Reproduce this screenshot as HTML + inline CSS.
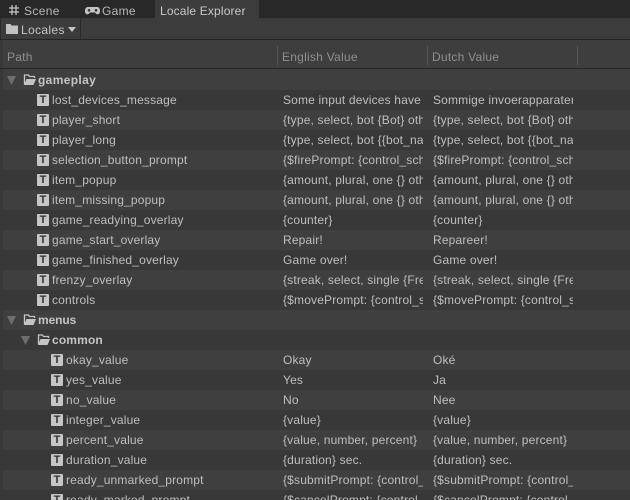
<!DOCTYPE html>
<html><head><meta charset="utf-8"><style>
html,body{margin:0;padding:0;background:#383838}
#p{position:relative;width:630px;height:500px;overflow:hidden;background:#383838;font-family:"Liberation Sans",sans-serif;font-size:12px;color:#bfbfbf;letter-spacing:.17px}
#p div,#p svg{position:absolute}
.t{white-space:nowrap;line-height:20px;height:20px}
.r{left:3px;width:627px;height:20px}
.l{background:#3f3f3f}
.c{overflow:hidden;white-space:nowrap;line-height:20px;height:20px}
.e{left:283px;width:140px}
.d{left:433px;width:140px}
.b{font-weight:bold;color:#c4c4c4;letter-spacing:.15px}
.h{color:#8f8f8f;top:47px;line-height:20px;height:20px;white-space:nowrap;letter-spacing:.25px}
.s{width:1px;top:46px;height:19px;background:#555}
.i{width:12px;height:12px;background:#c6c6c6;border-radius:1px;color:#333;font:bold 11px/12px "Liberation Sans",sans-serif;text-align:center;letter-spacing:0}
</style></head><body><div id="p">
<div style="left:0;top:0;width:630px;height:18px;background:#282828"></div>
<div style="left:155px;top:0;width:104px;height:19px;background:#3c3c3c"></div>
<svg style="left:8px;top:4px" width="12" height="12" viewBox="0 0 12 12" fill="none" stroke="#c8c8c8" stroke-width="1.200"><path d="M4 1v10M8 1v10M1 4h10M1 8h10"/></svg>
<div class="t" style="left:24px;top:1px;color:#b8b8b8;letter-spacing:.35px">Scene</div>
<svg style="left:85px;top:7px" width="15" height="8" viewBox="0 0 15 8"><path d="M3 0h9c2 0 3 1.500 3 4 0 3-2 4-3.500 3L10 5.500H5L3.500 7C2 8 0 7 0 4 0 1.500 1 0 3 0z" fill="#c4c4c4"/><circle cx="4" cy="3.300" r="1.300" fill="#333"/><circle cx="11" cy="3.300" r="1.300" fill="#333"/></svg>
<div class="t" style="left:102px;top:1px;color:#b8b8b8;letter-spacing:.3px">Game</div>
<div class="t" style="left:160px;top:1px;color:#c8c8c8;letter-spacing:.15px">Locale Explorer</div>
<div style="left:0;top:19px;width:630px;height:20px;background:#3c3c3c"></div>
<div style="left:0;top:39px;width:630px;height:1px;background:#242424"></div>
<div style="left:80px;top:19px;width:1px;height:20px;background:#2a2a2a"></div>
<div style="left:0;top:19px;width:1px;height:20px;background:#2a2a2a"></div>
<svg style="left:6px;top:23px" width="12" height="11" viewBox="0 0 12 11"><path d="M0 1h4.500l1 1.500H12V11H0z" fill="#c2c2c2"/></svg>
<div class="t" style="left:21px;top:20px;color:#c4c4c4;letter-spacing:.35px">Locales</div>
<svg style="left:68px;top:27px" width="9" height="5" viewBox="0 0 9 5"><path d="M0 0h8L4 5z" fill="#c4c4c4"/></svg>
<div style="left:3px;top:40px;width:627px;height:28px;background:#3e3e3e"></div>
<div style="left:0;top:68px;width:630px;height:1px;background:#262626"></div>
<div class="h" style="left:7px">Path</div><div class="h" style="left:282px">English Value</div><div class="h" style="left:432px">Dutch Value</div>
<div class="s" style="left:277px"></div><div class="s" style="left:427px"></div><div class="s" style="left:577px"></div>
<div style="left:3px;top:69px;width:627px;height:21px;background:#3f3f3f"></div>

<div class="r" style="top:90px;background:#383838"></div>
<div class="r l" style="top:110px"></div><div class="r l" style="top:150px"></div><div class="r l" style="top:190px"></div><div class="r l" style="top:230px"></div><div class="r l" style="top:270px"></div><div class="r l" style="top:310px"></div><div class="r l" style="top:350px"></div><div class="r l" style="top:390px"></div><div class="r l" style="top:430px"></div><div class="r l" style="top:470px"></div>

<svg style="left:0;top:0" width="630" height="500">
<g fill="#6e6e6e"><path d="M7 76h9l-4.500 9zM7 316h9l-4.500 9zM21 336h9l-4.500 9z"/></g>
<g fill="none" stroke="#c4c4c4" stroke-width="1.300"><path d="M24.500 84.500V75h4l1 1.500h5V78"/><path d="M24.500 324.500V315h4l1 1.500h5V318"/><path d="M38.500 344.500V335h4l1 1.500h5V338"/></g>
<g fill="#c4c4c4"><path d="M24 85l2.500-6H36l-2.500 6zM24 325l2.500-6H36l-2.500 6zM38 345l2.500-6H50l-2.500 6z"/></g>
</svg>

<div class="t b" style="left:38px;top:70px;letter-spacing:.35px">gameplay</div>
<div class="t b" style="left:38px;top:310px;letter-spacing:-.1px">menus</div>
<div class="t b" style="left:52px;top:330px">common</div>

<div class="i" style="left:37px;top:94px">T</div><div class="t" style="left:52px;top:90px">lost_devices_message</div><div class="c e" style="top:90px">Some input devices have</div><div class="c d" style="top:90px">Sommige invoerapparaten</div>
<div class="i" style="left:37px;top:114px">T</div><div class="t" style="left:52px;top:110px">player_short</div><div class="c e" style="top:110px">{type, select, bot {Bot} other</div><div class="c d" style="top:110px">{type, select, bot {Bot} other</div>
<div class="i" style="left:37px;top:134px">T</div><div class="t" style="left:52px;top:130px">player_long</div><div class="c e" style="top:130px">{type, select, bot {{bot_name</div><div class="c d" style="top:130px">{type, select, bot {{bot_name</div>
<div class="i" style="left:37px;top:154px">T</div><div class="t" style="left:52px;top:150px">selection_button_prompt</div><div class="c e" style="top:150px">{$firePrompt: {control_scheme</div><div class="c d" style="top:150px">{$firePrompt: {control_scheme</div>
<div class="i" style="left:37px;top:174px">T</div><div class="t" style="left:52px;top:170px">item_popup</div><div class="c e" style="top:170px">{amount, plural, one {} other</div><div class="c d" style="top:170px">{amount, plural, one {} other</div>
<div class="i" style="left:37px;top:194px">T</div><div class="t" style="left:52px;top:190px">item_missing_popup</div><div class="c e" style="top:190px">{amount, plural, one {} other</div><div class="c d" style="top:190px">{amount, plural, one {} other</div>
<div class="i" style="left:37px;top:214px">T</div><div class="t" style="left:52px;top:210px">game_readying_overlay</div><div class="c e" style="top:210px">{counter}</div><div class="c d" style="top:210px">{counter}</div>
<div class="i" style="left:37px;top:234px">T</div><div class="t" style="left:52px;top:230px">game_start_overlay</div><div class="c e" style="top:230px">Repair!</div><div class="c d" style="top:230px">Repareer!</div>
<div class="i" style="left:37px;top:254px">T</div><div class="t" style="left:52px;top:250px">game_finished_overlay</div><div class="c e" style="top:250px">Game over!</div><div class="c d" style="top:250px">Game over!</div>
<div class="i" style="left:37px;top:274px">T</div><div class="t" style="left:52px;top:270px">frenzy_overlay</div><div class="c e" style="top:270px">{streak, select, single {Frenzy</div><div class="c d" style="top:270px">{streak, select, single {Frenzy</div>
<div class="i" style="left:37px;top:294px">T</div><div class="t" style="left:52px;top:290px">controls</div><div class="c e" style="top:290px">{$movePrompt: {control_scheme</div><div class="c d" style="top:290px">{$movePrompt: {control_scheme</div>

<div class="i" style="left:51px;top:354px">T</div><div class="t" style="left:66px;top:350px">okay_value</div><div class="c e" style="top:350px">Okay</div><div class="c d" style="top:350px">Oké</div>
<div class="i" style="left:51px;top:374px">T</div><div class="t" style="left:66px;top:370px">yes_value</div><div class="c e" style="top:370px">Yes</div><div class="c d" style="top:370px">Ja</div>
<div class="i" style="left:51px;top:394px">T</div><div class="t" style="left:66px;top:390px">no_value</div><div class="c e" style="top:390px">No</div><div class="c d" style="top:390px">Nee</div>
<div class="i" style="left:51px;top:414px">T</div><div class="t" style="left:66px;top:410px">integer_value</div><div class="c e" style="top:410px">{value}</div><div class="c d" style="top:410px">{value}</div>
<div class="i" style="left:51px;top:434px">T</div><div class="t" style="left:66px;top:430px">percent_value</div><div class="c e" style="top:430px">{value, number, percent}</div><div class="c d" style="top:430px">{value, number, percent}</div>
<div class="i" style="left:51px;top:454px">T</div><div class="t" style="left:66px;top:450px">duration_value</div><div class="c e" style="top:450px">{duration} sec.</div><div class="c d" style="top:450px">{duration} sec.</div>
<div class="i" style="left:51px;top:474px">T</div><div class="t" style="left:66px;top:470px">ready_unmarked_prompt</div><div class="c e" style="top:470px">{$submitPrompt: {control_scheme</div><div class="c d" style="top:470px">{$submitPrompt: {control_scheme</div>
<div class="i" style="left:51px;top:494px">T</div><div class="t" style="left:66px;top:490px">ready_marked_prompt</div><div class="c e" style="top:490px">{$cancelPrompt: {control_scheme</div><div class="c d" style="top:490px">{$cancelPrompt: {control_scheme</div>
</div></body></html>
